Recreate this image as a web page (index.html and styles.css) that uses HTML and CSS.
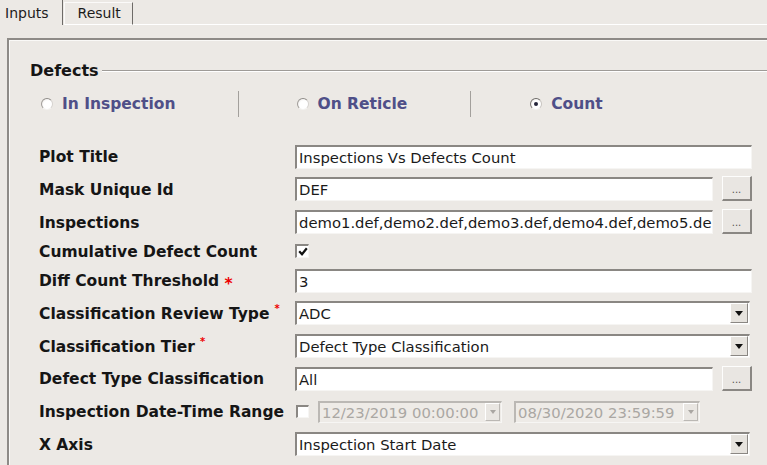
FILE: index.html
```html
<!DOCTYPE html>
<html>
<head>
<meta charset="utf-8">
<link rel="stylesheet" href="styles.css">
</head>
<body>
<div class="tabs">
  <div class="tab tab-active">Inputs</div>
  <div class="tab tab-idle">Result</div>
  <div class="tab-fill"></div>
</div>
<div class="panel">
  <div class="legend"><span class="legend-text">Defects</span><span class="legend-line"></span></div>
  <div class="radios">
    <div class="radio-cell c1"><span class="radio"></span><span class="radio-label">In Inspection</span></div>
    <span class="vsep"></span>
    <div class="radio-cell c2"><span class="radio"></span><span class="radio-label">On Reticle</span></div>
    <span class="vsep"></span>
    <div class="radio-cell c3"><span class="radio checked"></span><span class="radio-label">Count</span></div>
  </div>
  <div class="form">
    <div class="label">Plot Title</div>
    <div class="ctrl"><div class="field full">Inspections Vs Defects Count</div></div>

    <div class="label">Mask Unique Id</div>
    <div class="ctrl"><div class="field short">DEF</div><div class="btn">...</div></div>

    <div class="label">Inspections</div>
    <div class="ctrl"><div class="field short">demo1.def,demo2.def,demo3.def,demo4.def,demo5.de</div><div class="btn">...</div></div>

    <div class="label">Cumulative Defect Count</div>
    <div class="ctrl ctrl-check"><div class="check"><svg width="10" height="9" viewBox="0 0 10 9"><path d="M1.2 4.2 L4 7.2 L8.8 1.2" fill="none" stroke="#111" stroke-width="2.2"/></svg></div></div>

    <div class="label">Diff Count Threshold <span class="req">*</span></div>
    <div class="ctrl"><div class="field full">3</div></div>

    <div class="label">Classification Review Type<span class="req-sup">*</span></div>
    <div class="ctrl"><div class="select"><span class="select-text">ADC</span><span class="select-arrow"><span class="tri"></span></span></div></div>

    <div class="label">Classification Tier<span class="req-sup">*</span></div>
    <div class="ctrl"><div class="select"><span class="select-text">Defect Type Classification</span><span class="select-arrow"><span class="tri"></span></span></div></div>

    <div class="label">Defect Type Classification</div>
    <div class="ctrl"><div class="field short">All</div><div class="btn">...</div></div>

    <div class="label">Inspection Date-Time Range</div>
    <div class="ctrl">
      <div class="check small"></div>
      <div class="date d1"><span class="date-text">12/23/2019 00:00:00</span><span class="date-arrow"><span class="tri tri-dis"></span></span></div>
      <div class="date d2"><span class="date-text">08/30/2020 23:59:59</span><span class="date-arrow"><span class="tri tri-dis"></span></span></div>
    </div>

    <div class="label">X Axis</div>
    <div class="ctrl"><div class="select"><span class="select-text">Inspection Start Date</span><span class="select-arrow"><span class="tri"></span></span></div></div>
  </div>
</div>
</body>
</html>
```

FILE: styles.css
```css
* { box-sizing: border-box; }
html, body { margin: 0; padding: 0; }
body {
  background: #ece9e5;
  font-family: "DejaVu Sans", sans-serif;
  color: #1c1c1c;
  width: 767px;
  height: 465px;
  overflow: hidden;
}

/* tabs */
.tabs { display: flex; height: 25px; }
.tab { font-size: 14px; white-space: nowrap; }
.tab-active {
  padding: 2px 13px 0 5px;
  line-height: 22px;
  height: 25px;
  border-right: 1px solid #6e6b68;
}
.tab-idle {
  margin-top: 2px;
  margin-left: 1px;
  height: 23px;
  line-height: 20px;
  padding: 0 11px 1px 13px;
  border-top: 1px solid #fbfaf9;
  border-left: 1px solid #fbfaf9;
  border-right: 1px solid #6e6b68;
  border-bottom: 1px solid #ffffff;
}
.tab-fill { flex: 1; border-bottom: 1px solid #ffffff; }

/* panel */
.panel {
  margin: 13px 0 0 7px;
  height: 440px;
  border-top: 2px solid #8e8b87;
  border-left: 2px solid #8e8b87;
  box-shadow: inset 1px 1px 0 #faf9f7;
  padding-top: 22px;
}
.legend {
  display: flex;
  align-items: center;
  height: 18px;
  margin-left: 21px;
}
.legend-text { font-size: 16px; font-weight: bold; line-height: 18px; color: #151515; }
.legend-line {
  flex: 1;
  height: 2px;
  margin-left: 3px;
  border-top: 1px solid #9e9b97;
  border-bottom: 1px solid #ffffff;
}

/* radios */
.radios {
  display: flex;
  align-items: center;
  height: 26px;
  margin: 11px 0 0 30px;
}
.radio-cell { display: flex; align-items: center; }
.c1 { width: 198.5px; padding-left: 2px; }
.c2 { width: 231.7px; padding-left: 58px; }
.c3 { padding-left: 59px; }
.vsep { width: 1px; height: 26px; background: #a3a09c; }
.radio {
  width: 12px;
  height: 12px;
  border-radius: 50%;
  margin-right: 9px;
  border: 1px solid;
  border-color: #8f8c88 #d6d3cf #f4f3f1 #a09d99;
  background: radial-gradient(circle at 60% 60%, #ffffff 50%, #e4e1dd 100%);
  display: flex;
  align-items: center;
  justify-content: center;
}
.radio.checked::after {
  content: "";
  width: 4px;
  height: 4px;
  border-radius: 50%;
  background: #24243a;
}
.radio.checked { border-color: #6e6b68 #c8c5c1 #f4f3f1 #7e7b78; }
.radio-label { font-size: 15.5px; font-weight: bold; color: #4f4f88; line-height: 18px; white-space: nowrap; }

/* form */
.form {
  display: grid;
  grid-template-columns: 256px 457px;
  row-gap: 8.75px;
  align-items: center;
  margin: 27.6px 0 0 30px;
}
.label {
  font-size: 15.5px;
  font-weight: bold;
  line-height: 17px;
  height: 17px;
  padding-top: 1px;
  white-space: nowrap;
  color: #151515;
}
.req { color: #ee0000; vertical-align: -3px; line-height: 0; }
.req-sup { color: #ee0000; font-size: 10px; margin-left: 5px; vertical-align: 7px; line-height: 0; }
.ctrl { display: flex; align-items: center; height: 24px; }
.ctrl.ctrl-check { height: 17px; }

.field {
  height: 24px;
  background: #ffffff;
  border-top: 2px solid #8a8783;
  border-left: 2px solid #8a8783;
  border-right: 1px solid #f6f5f3;
  border-bottom: 1px solid #f6f5f3;
  font-size: 14.8px;
  line-height: 21px;
  padding-left: 2px;
  white-space: nowrap;
  overflow: hidden;
  color: #1a1a1a;
}
.field.full { width: 457px; }
.field.short { width: 419px; }
.btn {
  width: 30px;
  height: 25px;
  margin: -1px 0 0 9px;
  background: #e9e6e2;
  border-top: 1px solid #fdfdfc;
  border-left: 1px solid #fdfdfc;
  border-right: 2px solid #8a8783;
  border-bottom: 2px solid #8a8783;
  display: flex;
  align-items: center;
  justify-content: center;
  font-size: 10px;
  padding-top: 3px;
  color: #555350;
}

.select {
  width: 455px;
  height: 24px;
  background: #ffffff;
  border-top: 2px solid #8a8783;
  border-left: 2px solid #8a8783;
  border-right: 1px solid #f6f5f3;
  border-bottom: 1px solid #f6f5f3;
  display: flex;
}
.select-text {
  flex: 1;
  font-size: 14.8px;
  line-height: 21px;
  padding-left: 2px;
  white-space: nowrap;
  color: #1a1a1a;
}
.select-arrow {
  width: 18px;
  margin: 0 1px 1px 0;
  background: #e6e3de;
  border-top: 1px solid #ffffff;
  border-left: 1px solid #ffffff;
  border-right: 1px solid #8a8783;
  border-bottom: 1px solid #8a8783;
  display: flex;
  align-items: center;
  justify-content: center;
}
.tri {
  width: 0;
  height: 0;
  border-left: 4px solid transparent;
  border-right: 4px solid transparent;
  border-top: 5px solid #111111;
}
.tri-dis { border-top-color: #a9a6a2; border-left-width: 3.5px; border-right-width: 3.5px; border-top-width: 4px; }

.check {
  width: 14px;
  height: 14px;
  background: #ffffff;
  border-top: 2px solid #8a8783;
  border-left: 2px solid #8a8783;
  border-right: 1px solid #f6f5f3;
  border-bottom: 1px solid #f6f5f3;
  display: flex;
  align-items: center;
  justify-content: center;
}
.check.small { width: 13px; height: 13px; margin-left: 1px; }

.date {
  height: 22px;
  margin-left: 9px;
  background: #eeebe7;
  border-top: 2px solid #bbb8b4;
  border-left: 2px solid #bbb8b4;
  border-right: 1px solid #f7f6f4;
  border-bottom: 1px solid #f7f6f4;
  display: flex;
}
.d1 { width: 184px; }
.d2 { width: 186px; margin-left: 12px; }
.date-text {
  flex: 1;
  font-size: 14.8px;
  line-height: 19px;
  padding-left: 2px;
  color: #aaa7a3;
  white-space: nowrap;
  overflow: hidden;
}
.date-arrow {
  width: 15px;
  margin: 0 1px 1px 0;
  background: #e9e6e2;
  border-top: 1px solid #ffffff;
  border-left: 1px solid #ffffff;
  border-right: 1px solid #bbb8b4;
  border-bottom: 1px solid #bbb8b4;
  display: flex;
  align-items: center;
  justify-content: center;
}
```
